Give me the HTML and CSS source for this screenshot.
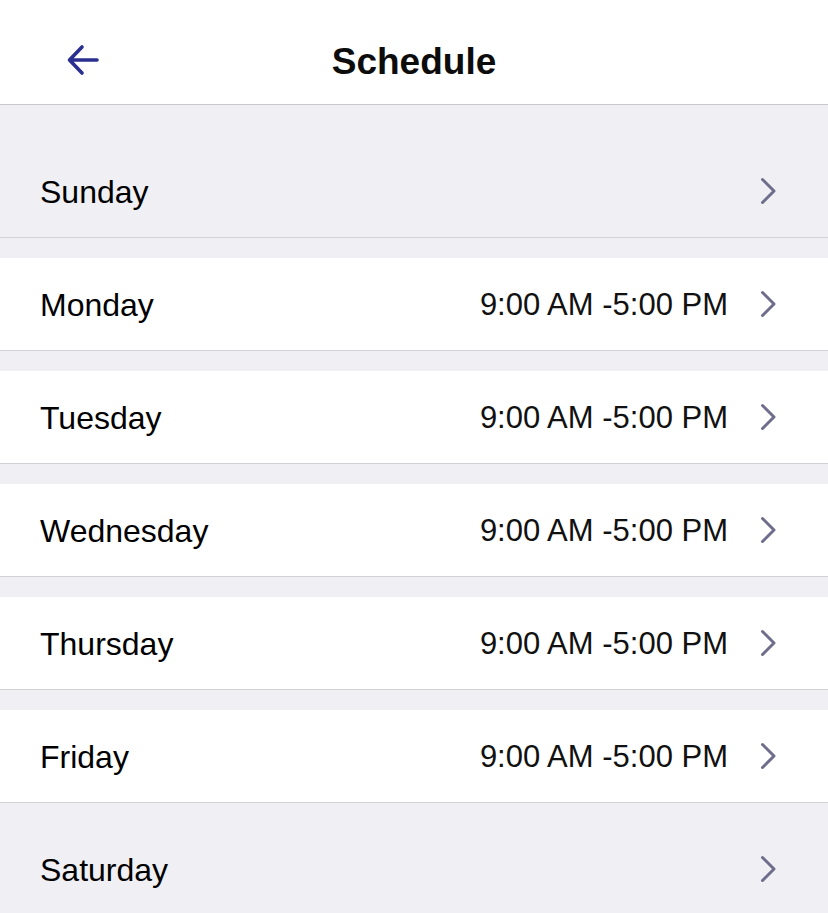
FILE: index.html
```html
<!DOCTYPE html>
<html lang="en">
<head>
<meta charset="UTF-8">
<meta name="viewport" content="width=device-width, initial-scale=1.0">
<title>Schedule</title>
<link rel="stylesheet" href="styles.css">
</head>
<body>
<div class="header">
    <button class="back" aria-label="Back">
        <svg width="34" height="32" viewBox="0 0 34 32">
            <path d="M31 16 H4 M16 3 L3.5 16 L16 29" fill="none" stroke="#2b2f8f" stroke-width="3.6" stroke-linecap="round" stroke-linejoin="round"/>
        </svg>
    </button>
    <h1>Schedule</h1>
</div>

<div class="days">
    <div class="day closed">
        <span class="name">Sunday</span>
        <span class="hours"></span>
        <svg class="chevron" width="16" height="28" viewBox="0 0 16 28"><path d="M2.5 2.5 L14 14 L2.5 25.5"/></svg>
    </div>
    <div class="day">
        <span class="name">Monday</span>
        <span class="hours">9:00 AM -5:00 PM</span>
        <svg class="chevron" width="16" height="28" viewBox="0 0 16 28"><path d="M2.5 2.5 L14 14 L2.5 25.5"/></svg>
    </div>
    <div class="day">
        <span class="name">Tuesday</span>
        <span class="hours">9:00 AM -5:00 PM</span>
        <svg class="chevron" width="16" height="28" viewBox="0 0 16 28"><path d="M2.5 2.5 L14 14 L2.5 25.5"/></svg>
    </div>
    <div class="day">
        <span class="name">Wednesday</span>
        <span class="hours">9:00 AM -5:00 PM</span>
        <svg class="chevron" width="16" height="28" viewBox="0 0 16 28"><path d="M2.5 2.5 L14 14 L2.5 25.5"/></svg>
    </div>
    <div class="day">
        <span class="name">Thursday</span>
        <span class="hours">9:00 AM -5:00 PM</span>
        <svg class="chevron" width="16" height="28" viewBox="0 0 16 28"><path d="M2.5 2.5 L14 14 L2.5 25.5"/></svg>
    </div>
    <div class="day">
        <span class="name">Friday</span>
        <span class="hours">9:00 AM -5:00 PM</span>
        <svg class="chevron" width="16" height="28" viewBox="0 0 16 28"><path d="M2.5 2.5 L14 14 L2.5 25.5"/></svg>
    </div>
    <div class="day closed">
        <span class="name">Saturday</span>
        <span class="hours"></span>
        <svg class="chevron" width="16" height="28" viewBox="0 0 16 28"><path d="M2.5 2.5 L14 14 L2.5 25.5"/></svg>
    </div>
</div>
</body>
</html>
```

FILE: styles.css
```css
body {
    margin: 0;
    font-family: "Liberation Sans", Arial, sans-serif;
    background-color: #efeff4;
    color: #000;
}

.header {
    position: relative;
    height: 84px;
    padding-top: 20px;
    display: flex;
    align-items: center;
    justify-content: center;
    background-color: #fff;
    border-bottom: 1px solid #c8c7cc;
}

.header h1 {
    margin: 0;
    font-size: 37px;
    font-weight: bold;
    color: #0c0c0c;
}

.back {
    position: absolute;
    left: 66px;
    top: 44px;
    padding: 0;
    border: none;
    background: none;
    display: flex;
    cursor: pointer;
}

.days {
    padding-top: 40px;
    display: flex;
    flex-direction: column;
    gap: 20px;
}

.day {
    height: 92px;
    display: flex;
    align-items: center;
    padding: 0 52px 0 40px;
    background-color: #fff;
    border-bottom: 1px solid #d1d1d6;
}

.day.closed {
    background-color: #efeff4;
}

.name {
    flex: 1;
    font-size: 32px;
    padding-top: 2px;
}

.hours {
    font-size: 31px;
    color: #111;
    margin-right: 32px;
    padding-top: 2px;
}

.chevron path {
    fill: none;
    stroke: #6e6d8c;
    stroke-width: 3;
    stroke-linecap: round;
    stroke-linejoin: round;
}
```
